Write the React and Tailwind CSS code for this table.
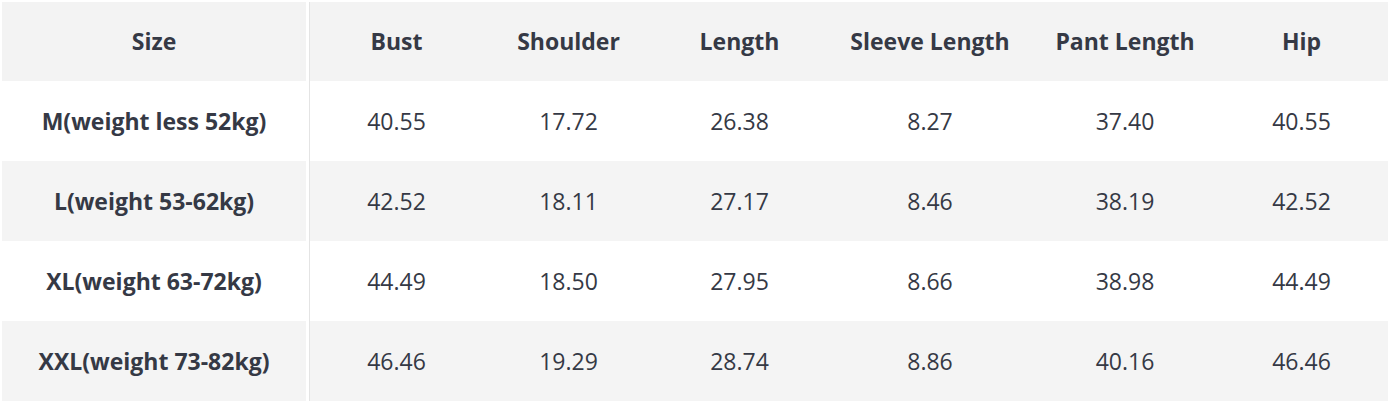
export default function App() {
  const cols = ["Size", "Bust", "Shoulder", "Length", "Sleeve Length", "Pant Length", "Hip"];
  const widths = ["w-[307px]", "w-[174px]", "w-[171px]", "w-[171px]", "w-[210px]", "w-[180px]", "w-[173px]"];
  const rows = [
    ["M(weight less 52kg)", "40.55", "17.72", "26.38", "8.27", "37.40", "40.55"],
    ["L(weight 53-62kg)", "42.52", "18.11", "27.17", "8.46", "38.19", "42.52"],
    ["XL(weight 63-72kg)", "44.49", "18.50", "27.95", "8.66", "38.98", "44.49"],
    ["XXL(weight 73-82kg)", "46.46", "19.29", "28.74", "8.86", "40.16", "46.46"],
  ];
  return (
    <div className="w-[1390px] h-[406px] bg-white pt-[2px] pl-[2px]" style={{ fontFamily: "'Open Sans', 'Noto Sans', sans-serif" }}>
      <table className="border-separate border-spacing-0 text-[#353945] table-fixed w-[1386px]">
        <colgroup>
          {widths.map((w, i) => (
            <col key={i} className={w} />
          ))}
        </colgroup>
        <thead>
          <tr className="bg-[#f3f3f3]">
            {cols.map((c, i) => (
              <th
                key={c}
                className={
                  "h-[79px] p-0 text-center align-middle text-[23px] leading-none font-bold " +
                  (i === 0 ? "border-r-[3px] border-r-white" : i === 1 ? "border-l border-l-[#e4e4e4]" : "")
                }
              >
                {c}
              </th>
            ))}
          </tr>
        </thead>
        <tbody>
          {rows.map((r, ri) => (
            <tr key={ri} className={ri % 2 === 0 ? "bg-white" : "bg-[#f4f4f4]"}>
              {r.map((v, i) => (
                <td
                  key={i}
                  className={
                    "h-[80px] p-0 text-center align-middle text-[23px] leading-none " +
                    (i === 0
                      ? "font-bold border-r-[3px] border-r-white"
                      : i === 1
                      ? "border-l border-l-[#e4e4e4]"
                      : "")
                  }
                >
                  {v}
                </td>
              ))}
            </tr>
          ))}
        </tbody>
      </table>
    </div>
  );
}
